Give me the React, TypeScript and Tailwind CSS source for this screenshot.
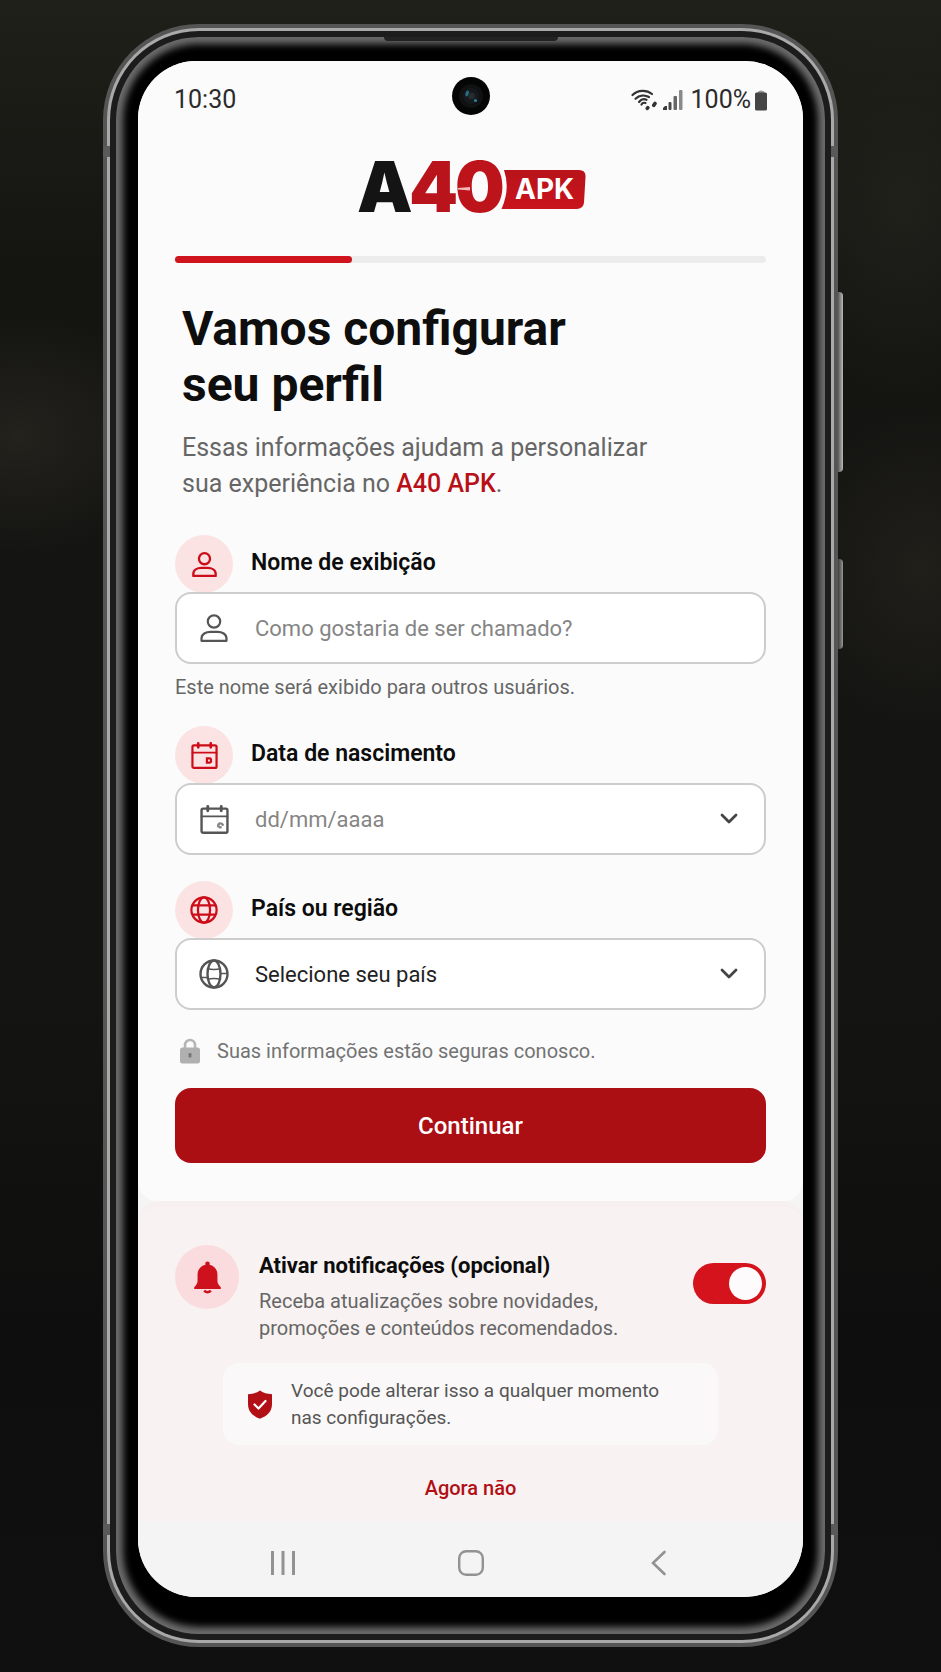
import type { ReactNode } from "react";
import { useState } from "react";

function StatusBar() {
  return (
    <div className="relative flex items-center justify-between px-9 pt-[21px] text-[#2b2b2b]">
      <span className="text-[25px] leading-9">10:30</span>
      <div className="absolute top-4 left-1/2 -translate-x-1/2">
        <svg width="38" height="38" viewBox="0 0 38 38" aria-hidden="true">
          <circle cx="19" cy="19" r="19" fill="#050505" />
          <circle cx="19" cy="19" r="12" fill="#0f1112" />
          <circle cx="19" cy="19" r="8" fill="#15191c" />
          <ellipse cx="15" cy="16.5" rx="1.6" ry="3" fill="#2c6f8d" transform="rotate(20 15 17)" />
          <circle cx="23.5" cy="23.5" r="1.6" fill="#2f7c9f" />
          <circle cx="19.5" cy="19" r="3.5" fill="#262b2e" />
        </svg>
      </div>
      <div className="flex items-center">
        <svg width="26" height="22" viewBox="0 0 26 22" fill="none" stroke="#333" strokeWidth="2.2" strokeLinecap="round" aria-hidden="true">
          <path d="M1.5 6C7 .8 15.5 .6 21 5" />
          <path d="M4.5 9.8C8.5 5.9 14 5.7 18 8" />
          <path d="M8 13c2-2.5 5-3.3 7.500-2.2" />
          <path d="M10.5 15.5c.8-1.5 2.5-2 4-1.5" />
          <path d="M16.8 18.7l-.5 .6M24 14.5l-1.2 1.8" strokeWidth="3.6" />
        </svg>
        <svg className="mr-2 ml-1.5" width="20" height="20" viewBox="0 0 20 20" aria-hidden="true">
          <path d="M0 20v-2l2-2h2v4z" fill="#3a3a3a" />
          <rect x="5.5" y="12" width="3" height="8" rx="1" fill="#4a4a4a" />
          <rect x="10.5" y="6" width="3.5" height="14" rx="1" fill="#666" />
          <rect x="16" y="0" width="3.5" height="20" rx="1" fill="#8a8a8a" />
        </svg>
        <span className="text-[25px] leading-9">100%</span>
        <svg className="ml-1" width="12" height="22" viewBox="0 0 12 22" aria-hidden="true">
          <path d="M2 4.5C3 .5 9 .5 10 4.5z" fill="#9a9a9a" />
          <rect x="0" y="3.5" width="12" height="18" rx="1.5" fill="#454545" />
        </svg>
      </div>
    </div>
  );
}

function Logo() {
  return (
    <svg className="mx-auto block" width="236" height="90" viewBox="0 0 236 90" role="img" aria-label="A40 APK">
      <defs>
        <linearGradient id="logoRed" x1="0" y1="0" x2="0" y2="1">
          <stop offset="0" stopColor="#b9131a" />
          <stop offset="1" stopColor="#c9141c" />
        </linearGradient>
      </defs>
      <path d="M151 28H226Q233 28 232.500 35L231 60.500Q230.500 67 223.500 67H148.500Q157.500 47 151 28z" fill="url(#logoRed)" />
      <g fontFamily="Inter, sans-serif" fontWeight="900" fontSize="70">
        <text x="4" y="70" fill="#141414">
          A
        </text>
        <text x="56" y="70" fill="#b9141b">
          4
        </text>
        <text x="102" y="70" fill="#bd141b">
          0
        </text>
      </g>
      <path d="M105 46l12 -1v3.500l-12 -1z" fill="#f3b8ba" />
      <text x="162" y="57" fill="#fff" fontFamily="Inter, sans-serif" fontWeight="700" fontSize="28">
        APK
      </text>
    </svg>
  );
}

function UserIcon({ size, strokeWidth = 2.2 }: { size: number; strokeWidth?: number }) {
  return (
    <svg width={size} height={size} viewBox="0 0 28 28" fill="none" stroke="currentColor" strokeWidth={strokeWidth} aria-hidden="true">
      <circle cx="14" cy="7.5" r="6.2" />
      <path d="M1.5 26.8v-2.3C1.5 20 6 17.8 10.5 17.8h7c4.5 0 9 2.2 9 6.7v2.3z" strokeLinejoin="round" />
    </svg>
  );
}

function CalendarIcon({ size, marker }: { size: number; marker: "box" | "arc" }) {
  return (
    <svg width={size} height={size} viewBox="0 0 28 28" fill="none" stroke="currentColor" strokeWidth="2.3" strokeLinecap="round" aria-hidden="true">
      <rect x="1.5" y="3.5" width="25" height="23.3" rx="1.5" />
      <path d="M1.5 11h25" strokeWidth="1.7" />
      <path d="M7.5 1.5v4M20.5 1.5v4" strokeWidth="2.8" />
      {marker === "box" ? (
        <path d="M16.5 17h3l1.2 1v2.5l-1.2 1h-3z" />
      ) : (
        <path d="M17.5 20.5c0-3 3-3.5 4.5-1.5M19 21.5h1" stroke="#888" />
      )}
    </svg>
  );
}

function GlobeIcon({ size, detailed = false }: { size: number; detailed?: boolean }) {
  return (
    <svg width={size} height={size} viewBox="0 0 30 30" fill="none" stroke="currentColor" strokeWidth="2.4" aria-hidden="true">
      <circle cx="15" cy="15" r="13.5" />
      <ellipse cx="15" cy="15" rx="6.5" ry="13.5" />
      {detailed ? (
        <path d="M8 9.5q7 2 14 0M8 20.5q7-2 14 0M3 18.5h6M21.5 14.5H28" strokeWidth="1.6" />
      ) : (
        <path d="M3 10h24M3 20h24" />
      )}
    </svg>
  );
}

function ChevronDown() {
  return (
    <svg width="18" height="12" viewBox="0 0 18 12" fill="none" stroke="#444" strokeWidth="2.8" strokeLinecap="round" strokeLinejoin="round" aria-hidden="true">
      <path d="M2 2l7 7 7-7" />
    </svg>
  );
}

type FieldProps = {
  id: string;
  label: string;
  badge: ReactNode;
  icon: ReactNode;
  children: ReactNode;
};

function Field({ id, label, badge, icon, children }: FieldProps) {
  return (
    <div>
      <div className="-mb-px flex items-center gap-[18px]">
        <span className="flex size-[58px] items-center justify-center rounded-full bg-[#fbe3e4] text-[#cc0d18]">{badge}</span>
        <label htmlFor={id} className="pb-0.5 text-[23px] leading-8 font-semibold text-[#0c0c0c]">
          {label}
        </label>
      </div>
      <div className="relative flex h-[72px] items-center rounded-2xl border-2 border-[#cdcdcd] bg-white">
        <span className="pointer-events-none absolute left-[21px] flex w-8 justify-center text-[#555]">{icon}</span>
        {children}
      </div>
    </div>
  );
}

function SetupForm() {
  return (
    <form className="px-[37px]" onSubmit={(e) => e.preventDefault()}>
      <Field id="name" label="Nome de exibição" badge={<UserIcon size={25} strokeWidth={2.6} />} icon={<UserIcon size={28} />}>
        <input
          id="name"
          type="text"
          placeholder="Como gostaria de ser chamado?"
          className="h-full w-full rounded-2xl bg-transparent pr-6 pl-[78px] text-[22px] text-[#222] placeholder:text-[#858585]"
        />
      </Field>
      <p className="mt-[7px] text-xl leading-8 text-[#666]">Este nome será exibido para outros usuários.</p>

      <div className="mt-[23px]">
        <Field id="birth" label="Data de nascimento" badge={<CalendarIcon size={27} marker="box" />} icon={<CalendarIcon size={29} marker="arc" />}>
          <input
            id="birth"
            type="text"
            placeholder="dd/mm/aaaa"
            className="h-full w-full rounded-2xl bg-transparent pr-16 pl-[78px] text-[22px] text-[#222] placeholder:text-[#858585]"
          />
          <button type="button" aria-label="Abrir calendário" className="absolute right-[26px]">
            <ChevronDown />
          </button>
        </Field>
      </div>

      <div className="mt-[26px]">
        <Field id="country" label="País ou região" badge={<GlobeIcon size={28} />} icon={<GlobeIcon size={30} detailed />}>
          <select id="country" className="h-full w-full appearance-none rounded-2xl bg-transparent pr-16 pl-[78px] text-[22px] text-[#222]">
            <option>Selecione seu país</option>
          </select>
          <span className="pointer-events-none absolute right-[26px]">
            <ChevronDown />
          </span>
        </Field>
      </div>

      <div className="mt-[25px] flex items-center gap-4 pl-1">
        <svg width="22" height="26" viewBox="0 0 22 26" aria-hidden="true">
          <path d="M6 12V7a5 5 0 0 1 10 0v5" fill="none" stroke="#b5b5b5" strokeWidth="2.6" />
          <rect x="1" y="9.5" width="20" height="16" rx="2.5" fill="#b0b0b0" />
          <rect x="9.5" y="15" width="3" height="4.5" rx="1" fill="#777" />
        </svg>
        <p className="text-xl leading-8 text-[#737373]">Suas informações estão seguras conosco.</p>
      </div>
      <button
        type="submit"
        className="mt-[21px] flex h-[75px] w-full items-center justify-center rounded-2xl bg-[#ab0e13] text-2xl font-medium text-white"
      >
        Continuar
      </button>
    </form>
  );
}

function Notifications() {
  const [enabled, setEnabled] = useState(true);

  return (
    <section className="rounded-t-[20px] border-t-[6px] border-[#f6f0f0] bg-[#f8f2f2] px-[37px] pt-[38px] pb-[18px]">
      <div className="flex items-start">
        <span className="flex size-16 shrink-0 items-center justify-center rounded-full bg-[#fadcde]">
          <svg width="27" height="33" viewBox="0 0 28 34" aria-hidden="true">
            <path
              d="M14 .5a2.2 2.2 0 0 0-2.2 2.6v.6C6.500 5 3.700 9 3.700 14v6.500c0 3-1.500 4.500-3.500 6.500v1.800h27.600V27c-2-2-3.500-3.500-3.500-6.500V14c0-5-2.800-9-8.100-10.300v-.6A2.200 2.200 0 0 0 14 .5z"
              fill="#cd121d"
            />
            <path d="M10.5 30.8q3.500 3 7 0" fill="none" stroke="#cd121d" strokeWidth="2.6" />
          </svg>
        </span>
        <div className="ml-5 flex-1 pt-[5px]">
          <label htmlFor="notify" className="block text-[22px] leading-8 font-bold text-[#0c0c0c]">
            Ativar notificações (opcional)
          </label>
          <p className="mt-1.5 text-xl leading-[27px] text-[#666]">
            Receba atualizações sobre novidades,
            <br />
            promoções e conteúdos recomendados.
          </p>
        </div>
        <div className="relative mt-[18px] h-[41px] w-[73px] shrink-0">
          <input
            id="notify"
            type="checkbox"
            role="switch"
            checked={enabled}
            onChange={(e) => setEnabled(e.target.checked)}
            className="peer absolute inset-0 size-full cursor-pointer appearance-none rounded-full bg-[#bbb] checked:bg-[#d5131d]"
          />
          <span className="pointer-events-none absolute top-1 left-1 size-[33px] rounded-full bg-[#fdfbfc] peer-checked:translate-x-8" />
        </div>
      </div>

      <div className="mx-12 mt-[21px] flex items-center gap-[18px] rounded-2xl bg-[#faf8f8] py-[14px] pl-6">
        <svg width="26" height="29" viewBox="0 0 26 29" aria-hidden="true">
          <path d="M13 .5C16 2.8 20 4 25 4.2V14c0 8-5 12-12 14.700C6 26 1 22 1 14V4.200C6 4 10 2.800 13 .5z" fill="#b30f16" />
          <path d="M7.5 14.5l4 4 7-7.5" fill="none" stroke="#fff" strokeWidth="2.2" strokeLinecap="round" strokeLinejoin="round" />
        </svg>
        <p className="text-[19px] leading-[27px] text-[#555]">
          Você pode alterar isso a qualquer momento
          <br />
          nas configurações.
        </p>
      </div>

      <div className="mt-[27px] text-center">
        <a href="#" className="text-xl leading-8 font-medium text-[#b10f15]">
          Agora não
        </a>
      </div>
    </section>
  );
}

function NavBar() {
  return (
    <nav className="flex h-[75px] items-center justify-center gap-[162px] bg-[#f4f4f4] pt-1.5 text-[#929292]">
      <button type="button" aria-label="Recentes">
        <svg width="26" height="26" viewBox="0 0 26 26" stroke="currentColor" strokeWidth="3" aria-hidden="true">
          <path d="M2.5 1v24M13 1v24M23.5 1v24" />
        </svg>
      </button>
      <button type="button" aria-label="Início">
        <svg width="26" height="26" viewBox="0 0 26 26" fill="none" stroke="currentColor" strokeWidth="2.4" aria-hidden="true">
          <rect x="1.2" y="1.2" width="23.6" height="23.6" rx="7" />
        </svg>
      </button>
      <button type="button" aria-label="Voltar">
        <svg width="26" height="26" viewBox="0 0 26 26" fill="none" stroke="currentColor" strokeWidth="2.6" strokeLinecap="round" aria-hidden="true">
          <path d="M18.500 2L7 13l11.500 11" />
        </svg>
      </button>
    </nav>
  );
}

function PhoneFrame({ children }: { children: ReactNode }) {
  return (
    <div className="relative mx-auto w-full max-w-[735px]">
      {/* side buttons */}
      <span className="absolute top-[268px] -right-[5px] h-[180px] w-[7px] rounded-r-sm bg-linear-to-r from-[#333] via-[#777] to-[#bbb]" />
      <span className="absolute top-[535px] -right-[5px] h-[90px] w-[7px] rounded-r-sm bg-linear-to-r from-[#222] via-[#555] to-[#999]" />
      {/* metal rim, groove, then glass edge */}
      <div className="relative rounded-[96px] bg-[#555] p-1">
        <div className="rounded-[92px] bg-[#a9a9a9] p-[3px]">
          <div className="rounded-[89px] bg-[#1c1c1c] p-[6px]">
            <div className="relative rounded-[83px] bg-black px-[22px] pt-6 pb-[37px] shadow-[inset_0_0_7px_7px_#6c6c6c]">
              <span className="absolute top-0 left-1/2 h-1 w-[174px] -translate-x-1/2 rounded-b-sm bg-[#222]" />
              <main className="overflow-hidden rounded-[58px] bg-[#f6f5f5]">{children}</main>
            </div>
          </div>
        </div>
      </div>
      {/* antenna lines */}
      <span className="absolute top-[122px] left-0 h-[11px] w-[7px] bg-[#5a5a5a]" />
      <span className="absolute top-[122px] right-0 h-[11px] w-[7px] bg-[#5a5a5a]" />
      <span className="absolute bottom-[112px] left-0 h-[11px] w-[7px] bg-[#5a5a5a]" />
      <span className="absolute right-0 bottom-[112px] h-[11px] w-[7px] bg-[#5a5a5a]" />
    </div>
  );
}

export default function App() {
  return (
    <div className="min-h-screen bg-[#111110] bg-[radial-gradient(ellipse_160px_120px_at_2%_26%,#23221d,transparent),radial-gradient(ellipse_140px_160px_at_98%_34%,#201f1a,transparent),radial-gradient(ellipse_140px_200px_at_96%_12%,#20201b,transparent),linear-gradient(#20201a,#141411_16%,#141412_60%,#0e0e0e_80%,#101010)] py-6 font-[Roboto,sans-serif]">
      <PhoneFrame>
        <div className="rounded-b-[20px] bg-[#fbfbfb] pb-[38px]">
          <StatusBar />
          <div className="mt-6">
            <Logo />
          </div>
          <div className="px-[37px] pt-6">
            <div className="h-[7px] rounded-full bg-[#ececec]" role="progressbar" aria-valuenow={30} aria-valuemin={0} aria-valuemax={100}>
              <div className="h-full w-[30%] rounded-full bg-[#cf141e]" />
            </div>
          </div>
          <div className="px-11 pt-[38px] pb-[33px]">
            <h1 className="text-5xl leading-[56px] font-bold text-[#0e0e0e]">
              Vamos configurar
              <br />
              seu perfil
            </h1>
            <p className="mt-[17px] text-[25px] leading-9 text-[#666]">
              Essas informações ajudam a personalizar
              <br />
              sua experiência no <span className="font-medium text-[#b90f17]">A40 APK</span>.
            </p>
          </div>
          <SetupForm />
        </div>
        <Notifications />
        <NavBar />
      </PhoneFrame>
    </div>
  );
}
